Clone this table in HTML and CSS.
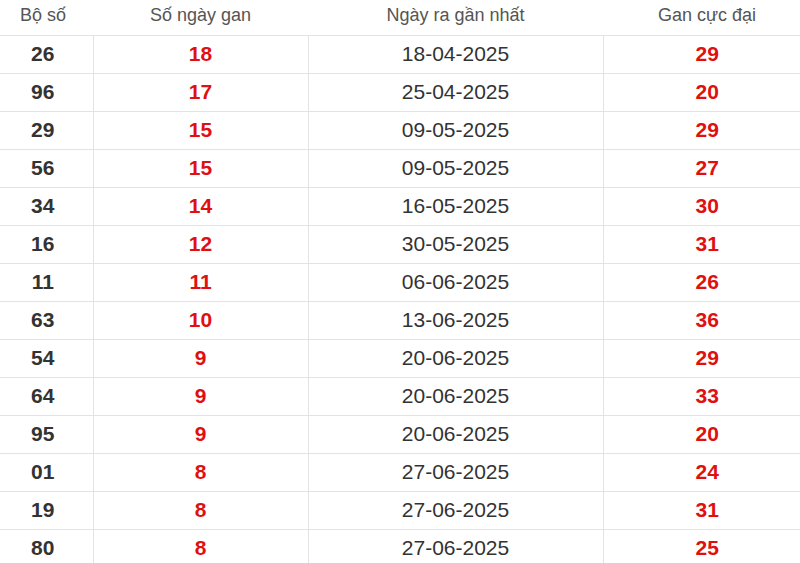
FILE: index.html
```html
<!DOCTYPE html>
<html lang="vi">
<head>
<meta charset="utf-8">
<link rel="stylesheet" href="styles.css">
</head>
<body>
<div class="wrap">
<table class="gan">
  <colgroup>
    <col class="c1"><col class="c2"><col class="c3"><col class="c4">
  </colgroup>
  <thead>
    <tr><th>Bộ số</th><th>Số ngày gan</th><th>Ngày ra gần nhất</th><th>Gan cực đại</th></tr>
  </thead>
  <tbody>
    <tr><td class="num">26</td><td class="red">18</td><td class="date">18-04-2025</td><td class="red">29</td></tr>
    <tr><td class="num">96</td><td class="red">17</td><td class="date">25-04-2025</td><td class="red">20</td></tr>
    <tr><td class="num">29</td><td class="red">15</td><td class="date">09-05-2025</td><td class="red">29</td></tr>
    <tr><td class="num">56</td><td class="red">15</td><td class="date">09-05-2025</td><td class="red">27</td></tr>
    <tr><td class="num">34</td><td class="red">14</td><td class="date">16-05-2025</td><td class="red">30</td></tr>
    <tr><td class="num">16</td><td class="red">12</td><td class="date">30-05-2025</td><td class="red">31</td></tr>
    <tr><td class="num">11</td><td class="red">11</td><td class="date">06-06-2025</td><td class="red">26</td></tr>
    <tr><td class="num">63</td><td class="red">10</td><td class="date">13-06-2025</td><td class="red">36</td></tr>
    <tr><td class="num">54</td><td class="red">9</td><td class="date">20-06-2025</td><td class="red">29</td></tr>
    <tr><td class="num">64</td><td class="red">9</td><td class="date">20-06-2025</td><td class="red">33</td></tr>
    <tr><td class="num">95</td><td class="red">9</td><td class="date">20-06-2025</td><td class="red">20</td></tr>
    <tr><td class="num">01</td><td class="red">8</td><td class="date">27-06-2025</td><td class="red">24</td></tr>
    <tr><td class="num">19</td><td class="red">8</td><td class="date">27-06-2025</td><td class="red">31</td></tr>
    <tr><td class="num">80</td><td class="red">8</td><td class="date">27-06-2025</td><td class="red">25</td></tr>
  </tbody>
</table>
</div>
</body>
</html>
```

FILE: styles.css
```css
html, body {
  margin: 0;
  padding: 0;
  background: #fff;
  overflow: hidden;
}
.wrap {
  width: 800px;
  height: 563px;
  overflow: hidden;
}
.gan {
  margin-left: -7px;
  width: 818px;
  border-collapse: collapse;
  table-layout: fixed;
  font-family: "Liberation Sans", Arial, sans-serif;
}
.c1 { width: 100px; }
.c2 { width: 215px; }
.c3 { width: 295px; }
.c4 { width: 208px; }
.gan th {
  height: 35px;
  padding: 0 0 4px;
  font-size: 18px;
  font-weight: normal;
  color: #555;
  text-align: center;
  vertical-align: middle;
  border-bottom: 1px solid #e3e3e3;
  line-height: 1;
  box-sizing: border-box;
}
.gan td {
  height: 38px;
  padding: 0 0 2px;
  text-align: center;
  vertical-align: middle;
  border-bottom: 1px solid #e3e3e3;
  border-left: 1px solid #e3e3e3;
  font-size: 21px;
  line-height: 1;
  box-sizing: border-box;
}
.gan td:first-child { border-left: none; }
.num { font-weight: bold; color: #333; }
.red { font-weight: bold; color: #e01010; }
.date { color: #333; font-size: 21.5px; }
```
